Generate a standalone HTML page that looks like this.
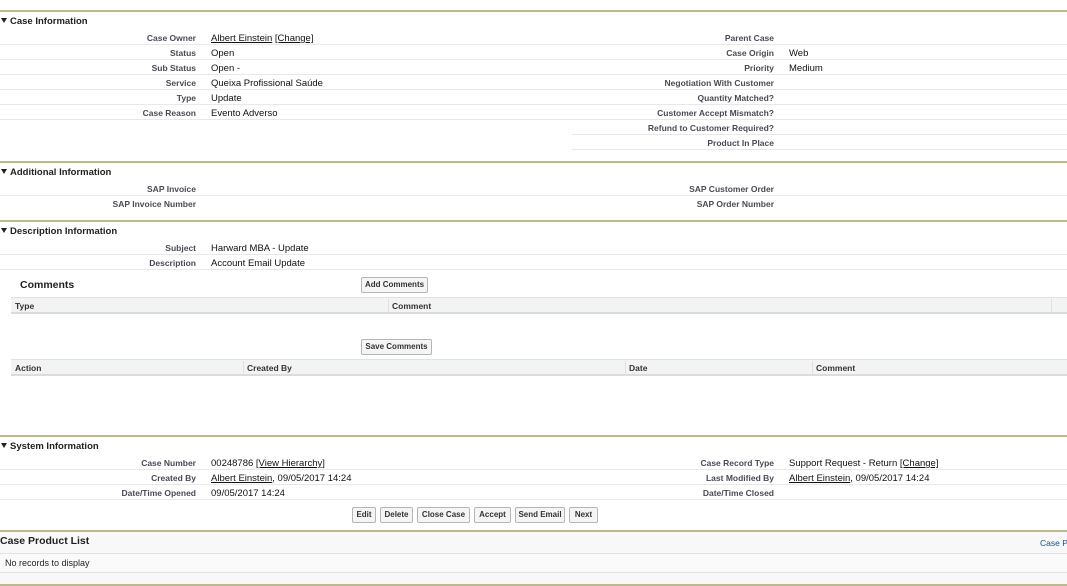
<!DOCTYPE html>
<html><head><meta charset="utf-8"><style>
*{margin:0;padding:0;box-sizing:border-box}
body{width:1067px;height:586px;background:#fff;position:relative;overflow:hidden;font-family:"Liberation Sans",Arial,sans-serif;color:#000}
.a{position:absolute;white-space:nowrap}
.g{position:absolute;left:0;width:1067px;height:2px;background:#bdb98a}
.h{position:absolute;left:0;font-size:9.5px;font-weight:bold;color:#222;white-space:nowrap}
.h:before{content:"";display:inline-block;border-left:3px solid transparent;border-right:3px solid transparent;border-top:5px solid #222;margin:0 3px 1px 1px;vertical-align:middle}
.l{position:absolute;font-size:8.5px;font-weight:bold;color:#4a4a56;text-align:right;white-space:nowrap;margin-top:1px}
.v{position:absolute;font-size:9.5px;color:#111;white-space:nowrap;margin-top:1px}
.s{position:absolute;height:1px;background:#e8e8e8}
u{text-decoration:underline}
.th{position:absolute;height:17px;background:#f2f3f3;border-bottom:2px solid #dcdcdc;border-top:1px solid #e0e0e0}
.tc{position:absolute;font-size:8.5px;font-weight:bold;color:#333;top:3px}
.b{position:absolute;height:16px;border:1px solid #b5b5b5;border-radius:2px;background:#f5f5f5;font-size:8px;font-weight:bold;color:#333;text-align:center;line-height:14px;padding:0;white-space:nowrap;overflow:hidden}
</style></head><body>
<div class="g" style="top:10px"></div>
<div class="h" style="top:16px">Case Information</div>

<div class="l" style="right:871px;top:32px">Case Owner</div><div class="v" style="left:211px;top:32px"><u>Albert Einstein</u> <u>[Change]</u></div>
<div class="l" style="right:871px;top:47px">Status</div><div class="v" style="left:211px;top:47px">Open</div>
<div class="l" style="right:871px;top:62px">Sub Status</div><div class="v" style="left:211px;top:62px">Open -</div>
<div class="l" style="right:871px;top:77px">Service</div><div class="v" style="left:211px;top:77px">Queixa Profissional Saúde</div>
<div class="l" style="right:871px;top:92px">Type</div><div class="v" style="left:211px;top:92px">Update</div>
<div class="l" style="right:871px;top:107px">Case Reason</div><div class="v" style="left:211px;top:107px">Evento Adverso</div>
<div class="s" style="left:0;width:1067px;top:44px"></div>
<div class="s" style="left:0;width:1067px;top:59px"></div>
<div class="s" style="left:0;width:1067px;top:74px"></div>
<div class="s" style="left:0;width:1067px;top:89px"></div>
<div class="s" style="left:0;width:1067px;top:104px"></div>
<div class="s" style="left:0;width:1067px;top:119px"></div>
<div class="s" style="left:572px;width:495px;top:134px"></div>
<div class="s" style="left:572px;width:495px;top:149px"></div>

<div class="l" style="right:293px;top:32px">Parent Case</div>
<div class="l" style="right:293px;top:47px">Case Origin</div><div class="v" style="left:789px;top:47px">Web</div>
<div class="l" style="right:293px;top:62px">Priority</div><div class="v" style="left:789px;top:62px">Medium</div>
<div class="l" style="right:293px;top:77px">Negotiation With Customer</div>
<div class="l" style="right:293px;top:92px">Quantity Matched?</div>
<div class="l" style="right:293px;top:107px">Customer Accept Mismatch?</div>
<div class="l" style="right:293px;top:122px">Refund to Customer Required?</div>
<div class="l" style="right:293px;top:137px">Product In Place</div>

<div class="g" style="top:161px"></div>
<div class="h" style="top:167px">Additional Information</div>
<div class="l" style="right:871px;top:183px">SAP Invoice</div>
<div class="l" style="right:871px;top:198px">SAP Invoice Number</div>
<div class="l" style="right:293px;top:183px">SAP Customer Order</div>
<div class="l" style="right:293px;top:198px">SAP Order Number</div>
<div class="s" style="left:0;width:1067px;top:195px"></div>

<div class="g" style="top:220px"></div>
<div class="h" style="top:226px">Description Information</div>
<div class="l" style="right:871px;top:242px">Subject</div><div class="v" style="left:211px;top:242px">Harward MBA - Update</div>
<div class="l" style="right:871px;top:257px">Description</div><div class="v" style="left:211px;top:257px">Account Email Update</div>
<div class="s" style="left:0;width:1067px;top:254px"></div>
<div class="s" style="left:0;width:1067px;top:269px"></div>

<div class="a" style="left:20px;top:279px;font-size:10.5px;font-weight:bold;color:#222">Comments</div>
<div class="b" style="left:361px;top:277px;width:67px">Add Comments</div>
<div class="th" style="left:11px;width:1056px;top:297px"></div>
<div class="tc" style="left:15px;top:301px">Type</div>
<div class="a" style="left:388px;top:299px;width:1px;height:14px;background:#e0e0e0"></div>
<div class="tc" style="left:392px;top:301px">Comment</div>
<div class="a" style="left:1051px;top:299px;width:1px;height:14px;background:#e0e0e0"></div>

<div class="b" style="left:361px;top:339px;width:71px">Save Comments</div>
<div class="th" style="left:11px;width:1056px;top:359px"></div>
<div class="tc" style="left:15px;top:363px">Action</div>
<div class="a" style="left:243px;top:361px;width:1px;height:14px;background:#e0e0e0"></div>
<div class="tc" style="left:247px;top:363px">Created By</div>
<div class="a" style="left:625px;top:361px;width:1px;height:14px;background:#e0e0e0"></div>
<div class="tc" style="left:629px;top:363px">Date</div>
<div class="a" style="left:812px;top:361px;width:1px;height:14px;background:#e0e0e0"></div>
<div class="tc" style="left:816px;top:363px">Comment</div>

<div class="g" style="top:435px"></div>
<div class="h" style="top:441px">System Information</div>
<div class="l" style="right:871px;top:457px">Case Number</div><div class="v" style="left:211px;top:457px">00248786 <u>[View Hierarchy]</u></div>
<div class="l" style="right:871px;top:472px">Created By</div><div class="v" style="left:211px;top:472px"><u>Albert Einstein</u>, 09/05/2017 14:24</div>
<div class="l" style="right:871px;top:487px">Date/Time Opened</div><div class="v" style="left:211px;top:487px">09/05/2017 14:24</div>
<div class="l" style="right:293px;top:457px">Case Record Type</div><div class="v" style="left:789px;top:457px">Support Request - Return <u>[Change]</u></div>
<div class="l" style="right:293px;top:472px">Last Modified By</div><div class="v" style="left:789px;top:472px"><u>Albert Einstein</u>, 09/05/2017 14:24</div>
<div class="l" style="right:293px;top:487px">Date/Time Closed</div>
<div class="s" style="left:0;width:1067px;top:469px"></div>
<div class="s" style="left:0;width:1067px;top:484px"></div>
<div class="s" style="left:0;width:1067px;top:499px"></div>

<div class="b" style="left:352px;top:507px;width:24px">Edit</div>
<div class="b" style="left:380px;top:507px;width:33px">Delete</div>
<div class="b" style="left:417px;top:507px;width:53px">Close Case</div>
<div class="b" style="left:474px;top:507px;width:37px">Accept</div>
<div class="b" style="left:515px;top:507px;width:50px">Send Email</div>
<div class="b" style="left:569px;top:507px;width:29px">Next</div>

<div class="g" style="top:530px"></div>
<div class="a" style="left:0;top:532px;width:1067px;height:52px;background:#f8f8f8"></div>
<div class="a" style="left:0;top:535px;font-size:10.5px;font-weight:bold;color:#222">Case Product List</div>
<div class="a" style="left:1040px;top:538px;font-size:8.5px;color:#015ba7">Case Pr</div>
<div class="a" style="left:0;top:553px;width:1067px;height:20px;background:#fafafa;border-top:1px solid #e3e3e3;border-bottom:1px solid #e3e3e3"></div>
<div class="a" style="left:5px;top:558px;font-size:9px;color:#222">No records to display</div>
<div class="g" style="top:584px"></div>
</body></html>
